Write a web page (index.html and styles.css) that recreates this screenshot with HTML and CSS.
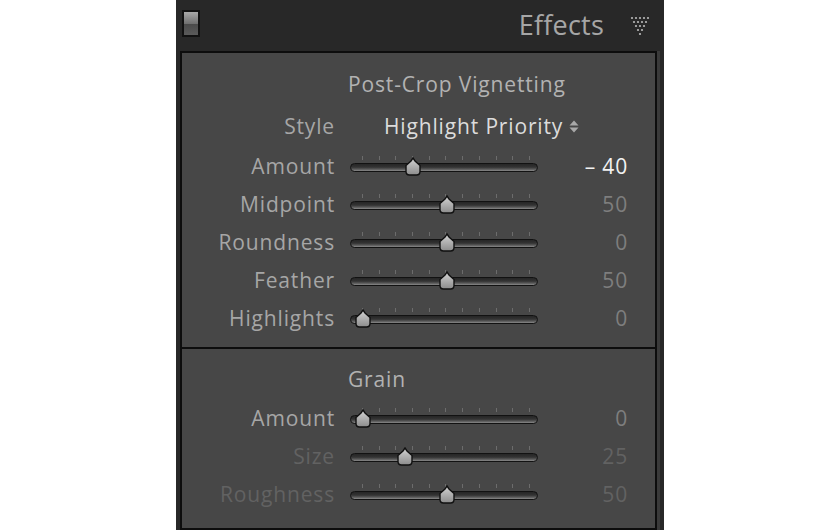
FILE: index.html
```html
<!DOCTYPE html>
<html lang="en">
<head>
  <meta charset="UTF-8">
  <title>Effects</title>
  <link rel="stylesheet" href="styles.css">
</head>
<body>
  <div class="panel">
    <div class="panel-header">
      <div class="switch"><span class="switch-top"></span><span class="switch-bottom"></span></div>
      <h1 class="panel-title">Effects</h1>
      <svg class="collapse-icon" width="20" height="20" viewBox="0 0 20 20">
        <g fill="#b8b8b8">
          <circle cx="2" cy="2" r="1.1"/><circle cx="6" cy="2" r="1.1"/><circle cx="10" cy="2" r="1.1"/><circle cx="14" cy="2" r="1.1"/><circle cx="18" cy="2" r="1.1"/>
          <circle cx="4" cy="6" r="1.1"/><circle cx="8" cy="6" r="1.1"/><circle cx="12" cy="6" r="1.1"/><circle cx="16" cy="6" r="1.1"/>
          <circle cx="6" cy="10" r="1.1"/><circle cx="10" cy="10" r="1.1"/><circle cx="14" cy="10" r="1.1"/>
          <circle cx="8" cy="14" r="1.1"/><circle cx="12" cy="14" r="1.1"/>
          <circle cx="10" cy="18" r="1.1"/>
        </g>
      </svg>
    </div>

    <div class="panel-body">
      <!-- Post-crop vignetting -->
      <section class="group group-vignette">
        <div class="group-title">Post-Crop Vignetting</div>
        <div class="row row-style">
          <span class="label">Style</span>
          <span class="style-value">Highlight Priority
            <svg class="updown" width="10" height="13" viewBox="0 0 10 13"><path d="M5 0.5 L9.5 5.5 H0.5 Z M5 12.5 L9.5 7.5 H0.5 Z" fill="#a8a8a8"/></svg>
          </span>
        </div>
        <div class="rows" id="vignetteRows"></div>
      </section>

      <!-- Grain -->
      <section class="group group-grain">
        <div class="group-title grain-title">Grain</div>
        <div class="rows" id="grainRows"></div>
      </section>
    </div>
  </div>

  <script src="sliders.js"></script>
</body>
</html>
```

FILE: sliders.js
```js
// Slider data: position is 0..1 along the track
const vignette = [
  { label: 'Amount', value: '\u2013 40', pos: 0.3, active: true },
  { label: 'Midpoint', value: '50', pos: 0.5 },
  { label: 'Roundness', value: '0', pos: 0.5 },
  { label: 'Feather', value: '50', pos: 0.5 },
  { label: 'Highlights', value: '0', pos: 0 }
];

const grain = [
  { label: 'Amount', value: '0', pos: 0 },
  { label: 'Size', value: '25', pos: 0.25, dim: true },
  { label: 'Roughness', value: '50', pos: 0.5, dim: true }
];

const thumbSvg =
  '<svg class="thumb-svg" width="18" height="19" viewBox="0 0 18 19">' +
  '<defs><linearGradient id="tg" x1="0" y1="0" x2="0" y2="1">' +
  '<stop offset="0" stop-color="#d4d4d4"/><stop offset="1" stop-color="#8c8c8c"/></linearGradient></defs>' +
  '<path d="M9 1 L11 4 L16 8.5 L16 14.5 Q16 18 12.5 18 L5.5 18 Q2 18 2 14.5 L2 8.5 L7 4 Z" fill="url(#tg)" stroke="#111" stroke-width="1.4"/>' +
  '</svg>';

function buildRows(containerId, items) {
  const container = document.getElementById(containerId);
  items.forEach(item => {
    let ticks = '';
    for (let i = 0; i < 11; i++) ticks += '<i></i>';

    const row = document.createElement('div');
    row.className = 'row' + (item.dim ? ' dim' : '');
    row.innerHTML =
      `<span class="label">${item.label}</span>` +
      `<div class="slider"><div class="ticks">${ticks}</div><div class="track">` +
      `<span class="thumb" style="left:${12 + item.pos * 168}px">${thumbSvg}</span></div></div>` +
      `<span class="value${item.active ? ' active' : ''}">${item.value}</span>`;
    container.appendChild(row);
  });
}

buildRows('vignetteRows', vignette);
buildRows('grainRows', grain);
```

FILE: styles.css
```css
/* Page */
body {
  margin: 0;
  background-color: #fff;
  display: flex;
  justify-content: center;
  font-family: "Open Sans", "DejaVu Sans", sans-serif;
}

/* Outer dark panel */
.panel {
  width: 488px;
  height: 530px;
  background-color: #282828;
  display: flex;
  flex-direction: column;
}

/* Header */
.panel-header {
  height: 51px;
  display: flex;
  align-items: flex-start;
  padding: 0 14px 0 6px;
}

.switch {
  width: 14px;
  height: 23px;
  margin-top: 10px;
  border: 2px solid #111;
  display: flex;
  flex-direction: column;
}

.switch-top {
  flex: 1;
  background: linear-gradient(#a8a8a8, #6e6e6e);
}

.switch-bottom {
  flex: 1;
  background: linear-gradient(#4a4a4a, #5a5a5a);
}

.panel-title {
  margin: 6px 26px 0 auto;
  font-size: 27px;
  font-weight: normal;
  color: #a6a6a6;
  letter-spacing: 0.2px;
}

.collapse-icon {
  margin-top: 16px;
}

/* Inner bordered body */
.panel-body {
  margin: 0 7px 0 4px;
  border: 2px solid #0d0d0d;
  background-color: #474747;
  flex: 1;
  box-shadow: 3px 0 0 #3a3a3a;
}

.group-vignette {
  padding: 10px 0 10px;
  border-bottom: 2px solid #0d0d0d;
}

.group-grain {
  padding: 10px 0 11px;
}

.group-title {
  height: 42px;
  line-height: 42px;
  padding-left: 166px;
  font-size: 21px;
  letter-spacing: 0.85px;
  color: #b2b2b2;
}

.grain-title {
  height: 40px;
  line-height: 40px;
}

/* Rows: label | slider | value */
.row {
  display: grid;
  grid-template-columns: 152px 188px 73px;
  column-gap: 16px;
  align-items: center;
  height: 38px;
  font-size: 21px;
  letter-spacing: 0.85px;
}

.row-style {
  height: 42px;
}

.label {
  text-align: right;
  margin-right: -1px;
  color: #a6a6a6;
}

.style-value {
  grid-column: 2 / 4;
  padding-left: 34px;
  color: #dcdcdc;
  display: flex;
  align-items: center;
  gap: 6px;
}

.value {
  text-align: right;
  margin-right: -1px;
  color: #7e7e7e;
}

.value.active {
  color: #f2f2f2;
}

.dim .label,
.dim .value {
  color: #626262;
}

/* Slider */
.slider {
  padding-bottom: 4px;
}

.ticks {
  height: 4px;
  margin: 0 8px 3px 12px;
  display: flex;
  justify-content: space-between;
}

.ticks i {
  width: 1px;
  background-color: #6c6c6c;
}

.track {
  position: relative;
  height: 7px;
  border: 1px solid #121212;
  border-radius: 5px;
  background: linear-gradient(#262626, #333 45%, #5a5a5a 75%, #8a8a8a);
}

.thumb {
  position: absolute;
  top: -7px;
  margin-left: -9px;
  width: 18px;
  height: 19px;
}

.thumb-svg {
  display: block;
}
```
